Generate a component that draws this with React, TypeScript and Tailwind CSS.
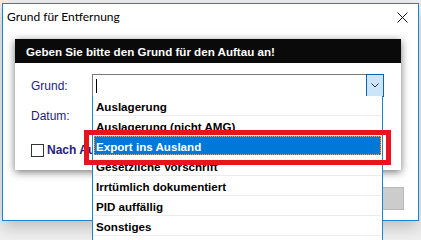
import React from "react";

const items = [
  "Auslagerung",
  "Auslagerung (nicht AMG)",
  "Export ins Ausland",
  "Gesetzliche Vorschrift",
  "Irrtümlich dokumentiert",
  "PID auffällig",
  "Sonstiges",
];

export default function App() {
  return (
    <div className="relative w-[421px] h-[240px] overflow-hidden bg-[#f0f0f0] font-['Liberation_Sans',Arial,sans-serif]">
      <div className="ml-[2px] mt-[3px] w-[417px] h-[218px] border border-[#1883d7] bg-white flex flex-col shadow-[0_6px_16px_rgba(0,0,0,0.22)]">
        {/* title bar */}
        <div className="h-[26px] flex items-center justify-between pl-[4px] pr-[10px]">
          <span className="text-[12px] text-black font-['Lato',sans-serif] leading-none">Grund für Entfernung</span>
          <svg width="11" height="11" viewBox="0 0 11 11" className="block">
            <path d="M0.5 0.5 L10.5 10.5 M10.5 0.5 L0.5 10.5" stroke="#111" strokeWidth="1" fill="none" />
          </svg>
        </div>
        {/* inner dialog */}
        <div className="ml-[12px] mt-[9px] w-[386px] bg-white shadow-[0_2px_8px_rgba(0,0,0,0.55)] flex flex-col">
          <div className="h-[24px] bg-[#0a0a0a] flex items-center pl-[11px]">
            <span className="text-white font-bold text-[11.6px] leading-none pt-px">Geben Sie bitte den Grund für den Auftau an!</span>
          </div>
          <div className="pt-[11px] pb-[11px] pl-[16px] flex flex-col">
            <div className="flex items-center h-[23px]">
              <span className="w-[61px] text-[12px] text-[#1e1e7a]">Grund:</span>
              <div className="relative w-[292px] h-[23px] flex border border-[#7a7a7a]">
                <div className="flex-1 flex items-center pl-[3px]">
                  <div className="w-px h-[14px] bg-black" />
                </div>
                <div className="w-[18px] -my-px -mr-px border border-[#0a62b0] bg-[#cce4f7] flex items-center justify-center">
                  <svg width="8" height="5" viewBox="0 0 8 5">
                    <path d="M0.5 0.5 L4 4 L7.5 0.5" stroke="#333" strokeWidth="1" fill="none" />
                  </svg>
                </div>
                {/* dropdown list */}
                <div className="absolute left-[-1px] top-full w-[291px] border-x border-b border-[#1883d7] bg-white z-10 flex flex-col">
                  {items.map((it, i) =>
                    i === 2 ? (
                      <div key={it} className="h-[20px] px-px">
                        <div className="h-[19px] bg-[#0078d7] border border-dotted border-[#f0a040] flex items-center pl-[1px]">
                          <span className="text-white font-bold text-[11.6px] leading-none pt-[2px]">{it}</span>
                        </div>
                      </div>
                    ) : (
                      <div key={it} className="h-[20px] border-b border-[#ececec] flex items-center pl-[2px] mx-px">
                        <span className="text-black font-bold text-[11.6px] leading-none pt-[2px]">{it}</span>
                      </div>
                    )
                  )}
                  <div className="h-[20px]" />
                </div>
              </div>
            </div>
            <div className="flex items-center h-[23px] mt-[7px]">
              <span className="w-[61px] text-[12px] text-[#1e1e7a]">Datum:</span>
              <div className="w-[120px] h-[23px] border border-[#7a7a7a]" />
            </div>
            <div className="flex items-center h-[18px] mt-[14px]">
              <div className="w-[13px] h-[13px] border border-[#333] bg-white" />
              <span className="ml-[3px] w-[45px] overflow-hidden whitespace-nowrap text-[12px] font-bold text-[#1e1e7a]">Nach Auftau</span>
            </div>
          </div>
        </div>
        {/* buttons */}
        <div className="mt-[17px] mr-[14px] flex justify-end gap-[8px]">
          <div className="w-[75px] h-[23px] bg-[#cccccc] border border-[#b8b8b8]" />
          <div className="w-[75px] h-[23px] bg-[#cccccc] border border-[#b8b8b8]" />
        </div>
      </div>
      {/* red annotation box */}
      <div className="absolute left-[84px] top-[130px] w-[307px] h-[35px] border-[5px] border-[#e8131f] z-20" />
    </div>
  );
}
